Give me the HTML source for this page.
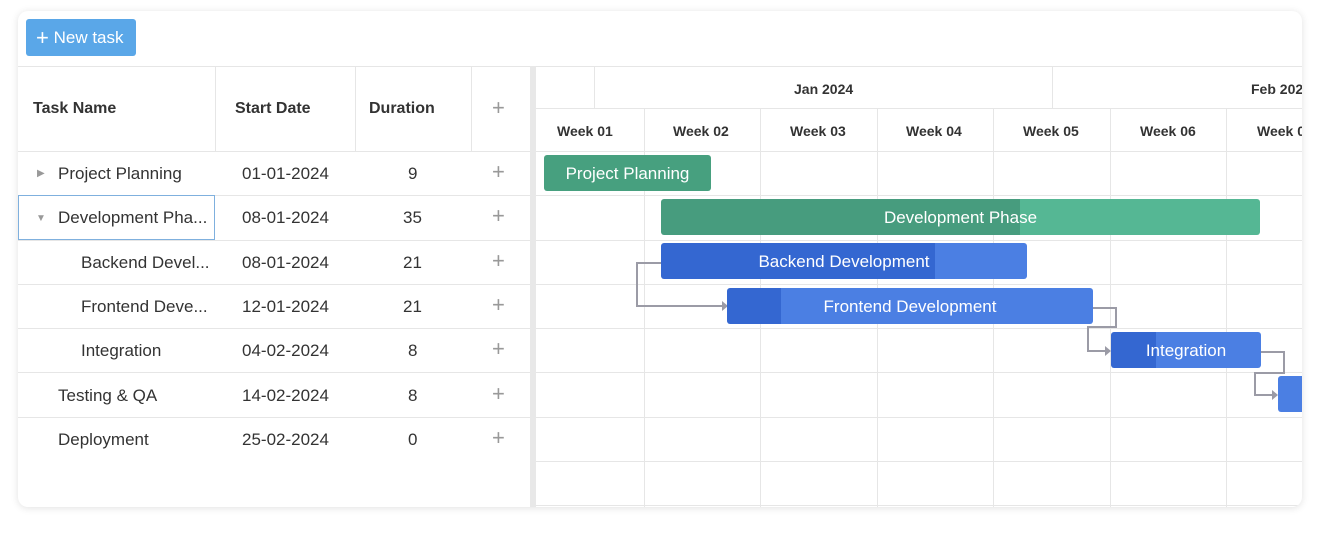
<!DOCTYPE html>
<html><head><meta charset="utf-8"><style>
*{box-sizing:border-box;margin:0;padding:0}
body{width:1320px;height:538px;background:#fff;font-family:"Liberation Sans",sans-serif;color:#333;position:relative;overflow:hidden}
.card{position:absolute;left:18px;top:11px;width:1284px;height:496px;background:#fff;border-radius:10px;box-shadow:0 1px 8px rgba(0,0,0,.12);overflow:hidden}
.a{position:absolute}
.btn{left:8px;top:8px;width:110px;height:37px;background:#5aa7e8;border-radius:3px;color:#fff;font-size:17px;line-height:37px;padding-left:10px}
.hl{background:#e6e6e6}
.t{position:absolute;font-size:17px;white-space:nowrap;color:#333}
.h{font-weight:bold;font-size:16px;color:#333}
.w{font-size:14px;font-weight:bold;color:#333;position:absolute;white-space:nowrap}
.plus{position:absolute;color:#999;font-size:22px;font-weight:300}
.bar{position:absolute;height:36px;border-radius:3px;color:#fff;font-size:17px;line-height:38px;text-align:center;overflow:hidden}
.bar span{position:relative}
</style></head><body>
<div class="card">
<div class="a btn"><span style="font-size:22px;vertical-align:-2px">+</span> New task</div>
<div class="a hl" style="left:0;top:55px;width:1284px;height:1px"></div>
<div class="a hl" style="left:197px;top:55px;width:1px;height:85px"></div>
<div class="a hl" style="left:337px;top:55px;width:1px;height:85px"></div>
<div class="a hl" style="left:453px;top:55px;width:1px;height:85px"></div>
<div class="t h" style="left:15px;top:89px">Task Name</div>
<div class="t h" style="left:217px;top:89px">Start Date</div>
<div class="t h" style="left:351px;top:89px">Duration</div>
<div class="plus" style="left:474px;top:84px">+</div>
<div class="a hl" style="left:0;top:140px;width:1284px;height:1px"></div>
<div class="a hl" style="left:0;top:184px;width:1284px;height:1px"></div>
<div class="a hl" style="left:0;top:229px;width:1284px;height:1px"></div>
<div class="a hl" style="left:0;top:273px;width:1284px;height:1px"></div>
<div class="a hl" style="left:0;top:317px;width:1284px;height:1px"></div>
<div class="a hl" style="left:0;top:361px;width:1284px;height:1px"></div>
<div class="a hl" style="left:0;top:406px;width:1284px;height:1px"></div>
<div class="a hl" style="left:518px;top:450px;width:766px;height:1px"></div>
<div class="a hl" style="left:518px;top:494px;width:766px;height:1px"></div>
<div class="a" style="left:0;top:184px;width:197px;height:45px;border:1px solid #7fb0de"></div>
<div class="a" style="left:512px;top:55px;width:6px;height:441px;background:#e8e8e8"></div>
<div class="t" style="left:19px;top:157px;color:#999;font-size:10px">▶</div>
<div class="t" style="left:40px;top:153px">Project Planning</div>
<div class="t" style="left:18px;top:202px;color:#999;font-size:10px">▼</div>
<div class="t" style="left:40px;top:197px">Development Pha...</div>
<div class="t" style="left:63px;top:242px">Backend Devel...</div>
<div class="t" style="left:63px;top:286px">Frontend Deve...</div>
<div class="t" style="left:63px;top:330px">Integration</div>
<div class="t" style="left:40px;top:375px">Testing &amp; QA</div>
<div class="t" style="left:40px;top:419px">Deployment</div>
<div class="t" style="left:224px;top:153px">01-01-2024</div>
<div class="t" style="left:224px;top:197px">08-01-2024</div>
<div class="t" style="left:224px;top:242px">08-01-2024</div>
<div class="t" style="left:224px;top:286px">12-01-2024</div>
<div class="t" style="left:224px;top:330px">04-02-2024</div>
<div class="t" style="left:224px;top:375px">14-02-2024</div>
<div class="t" style="left:224px;top:419px">25-02-2024</div>
<div class="t" style="left:390px;top:153px">9</div>
<div class="t" style="left:385px;top:197px">35</div>
<div class="t" style="left:385px;top:242px">21</div>
<div class="t" style="left:385px;top:286px">21</div>
<div class="t" style="left:390px;top:330px">8</div>
<div class="t" style="left:390px;top:375px">8</div>
<div class="t" style="left:390px;top:419px">0</div>
<div class="plus" style="left:474px;top:148px">+</div>
<div class="plus" style="left:474px;top:192px">+</div>
<div class="plus" style="left:474px;top:237px">+</div>
<div class="plus" style="left:474px;top:281px">+</div>
<div class="plus" style="left:474px;top:325px">+</div>
<div class="plus" style="left:474px;top:370px">+</div>
<div class="plus" style="left:474px;top:414px">+</div>
<div class="a hl" style="left:518px;top:97px;width:766px;height:1px"></div>
<div class="a hl" style="left:576px;top:55px;width:1px;height:42px"></div>
<div class="a hl" style="left:1034px;top:55px;width:1px;height:42px"></div>
<div class="w" style="left:776px;top:70px">Jan 2024</div>
<div class="w" style="left:1233px;top:70px">Feb 2024</div>
<div class="a hl" style="left:626px;top:97px;width:1px;height:399px"></div>
<div class="a hl" style="left:742px;top:97px;width:1px;height:399px"></div>
<div class="a hl" style="left:859px;top:97px;width:1px;height:399px"></div>
<div class="a hl" style="left:975px;top:97px;width:1px;height:399px"></div>
<div class="a hl" style="left:1092px;top:97px;width:1px;height:399px"></div>
<div class="a hl" style="left:1208px;top:97px;width:1px;height:399px"></div>
<div class="w" style="left:539px;top:112px">Week 01</div>
<div class="w" style="left:655px;top:112px">Week 02</div>
<div class="w" style="left:772px;top:112px">Week 03</div>
<div class="w" style="left:888px;top:112px">Week 04</div>
<div class="w" style="left:1005px;top:112px">Week 05</div>
<div class="w" style="left:1122px;top:112px">Week 06</div>
<div class="w" style="left:1239px;top:112px">Week 07</div>
<svg class="a" style="left:0;top:0" width="1284" height="496">
<g fill="none" stroke="#9b9ba6" stroke-width="2">
<path d="M643 252H619V295H705"/>
<path d="M1075 297H1098V316H1070V340H1088"/>
<path d="M1243 341H1266V362H1237V384H1254"/>
</g>
<g fill="#9b9ba6"><path d="M704 290L710 295L704 300Z"/><path d="M1087 335L1093 340L1087 345Z"/><path d="M1254 379L1260 384L1254 389Z"/></g>
</svg>
<div class="bar" style="left:526px;top:144px;width:167px;background:#47a07f"><span>Project Planning</span></div>
<div class="bar" style="left:643px;top:188px;width:599px;background:linear-gradient(90deg,#479c7e 0,#479c7e 359px,#55b794 359px)"><span>Development Phase</span></div>
<div class="bar" style="left:643px;top:232px;width:366px;background:linear-gradient(90deg,#3467d1 0,#3467d1 274px,#4b7fe3 274px)"><span>Backend Development</span></div>
<div class="bar" style="left:709px;top:277px;width:366px;background:linear-gradient(90deg,#3467d1 0,#3467d1 54px,#4b7fe3 54px)"><span>Frontend Development</span></div>
<div class="bar" style="left:1093px;top:321px;width:150px;background:linear-gradient(90deg,#3467d1 0,#3467d1 45px,#4b7fe3 45px)"><span>Integration</span></div>
<div class="bar" style="left:1260px;top:365px;width:40px;background:#4b7fe3"></div>
</div>
</body></html>
